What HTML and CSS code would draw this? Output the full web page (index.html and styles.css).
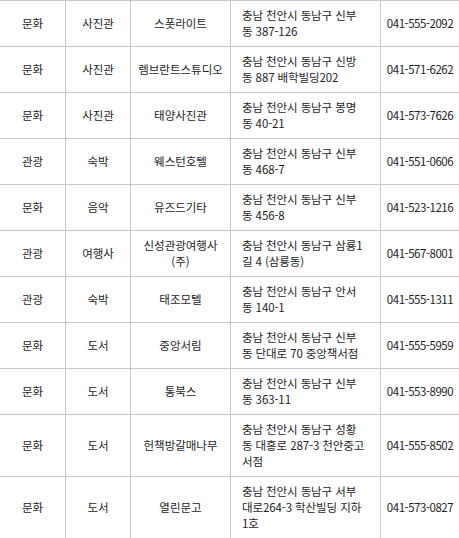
FILE: index.html
```html
<!DOCTYPE html>
<html lang="ko">
<head>
<meta charset="utf-8">
<title>시설 목록</title>
<link rel="stylesheet" href="styles.css">
</head>
<body>
<table class="list">
  <colgroup>
    <col class="c-type">
    <col class="c-cat">
    <col class="c-name">
    <col class="c-addr">
    <col class="c-tel">
  </colgroup>
  <tbody>
    <tr><td>문화</td><td>사진관</td><td>스폿라이트</td><td class="addr">충남 천안시 동남구 신부<br>동 387-126</td><td class="tel">041-555-2092</td></tr>
    <tr><td>문화</td><td>사진관</td><td>렘브란트스튜디오</td><td class="addr">충남 천안시 동남구 신방<br>동 887 배학빌딩202</td><td class="tel">041-571-6262</td></tr>
    <tr><td>문화</td><td>사진관</td><td>태양사진관</td><td class="addr">충남 천안시 동남구 봉명<br>동 40-21</td><td class="tel">041-573-7626</td></tr>
    <tr><td>관광</td><td>숙박</td><td>웨스턴호텔</td><td class="addr">충남 천안시 동남구 신부<br>동 468-7</td><td class="tel">041-551-0606</td></tr>
    <tr><td>문화</td><td>음악</td><td>유즈드기타</td><td class="addr">충남 천안시 동남구 신부<br>동 456-8</td><td class="tel">041-523-1216</td></tr>
    <tr><td>관광</td><td>여행사</td><td>신성관광여행사<br>(주)</td><td class="addr">충남 천안시 동남구 삼룡1<br>길 4 (삼룡동)</td><td class="tel">041-567-8001</td></tr>
    <tr><td>관광</td><td>숙박</td><td>태조모텔</td><td class="addr">충남 천안시 동남구 안서<br>동 140-1</td><td class="tel">041-555-1311</td></tr>
    <tr><td>문화</td><td>도서</td><td>중앙서림</td><td class="addr">충남 천안시 동남구 신부<br>동 단대로 70 중앙책서점</td><td class="tel">041-555-5959</td></tr>
    <tr><td>문화</td><td>도서</td><td>통북스</td><td class="addr">충남 천안시 동남구 신부<br>동 363-11</td><td class="tel">041-553-8990</td></tr>
    <tr><td>문화</td><td>도서</td><td>헌책방갈매나무</td><td class="addr">충남 천안시 동남구 성황<br>동 대흥로 287-3 천안중고<br>서점</td><td class="tel">041-555-8502</td></tr>
    <tr><td>문화</td><td>도서</td><td>열린문고</td><td class="addr">충남 천안시 동남구 서부<br>대로264-3 학산빌딩 지하<br>1호</td><td class="tel">041-573-0827</td></tr>
  </tbody>
</table>
</body>
</html>
```

FILE: styles.css
```css
html, body {
  margin: 0;
  padding: 0;
  background: #ffffff;
  overflow: hidden;
}

.list {
  border-collapse: separate;
  border-spacing: 0;
  table-layout: fixed;
  width: 459px;
  font-family: "Noto Sans CJK KR", "Noto Sans", sans-serif;
  font-size: 11.5px;
  line-height: 16px;
  color: #1e1e1e;
}

.c-type { width: 66px; }
.c-cat { width: 65px; }
.c-name { width: 100px; }
.c-addr { width: 150px; }
.c-tel { width: 78px; }

.list td {
  box-sizing: border-box;
  padding: 6px 1px 7px;
  border-right: 1px solid #c8c8c8;
  border-bottom: 1px solid #c8c8c8;
  text-align: center;
  vertical-align: middle;
  white-space: nowrap;
  overflow: hidden;
}

.list tr:first-child td {
  border-top: 1px solid #c8c8c8;
}

.list td:last-child {
  border-right: none;
}

.list td.addr {
  text-align: left;
  padding-left: 11px;
  padding-right: 2px;
  letter-spacing: -0.1px;
}

.list td.tel {
  letter-spacing: -0.45px;
}
```
